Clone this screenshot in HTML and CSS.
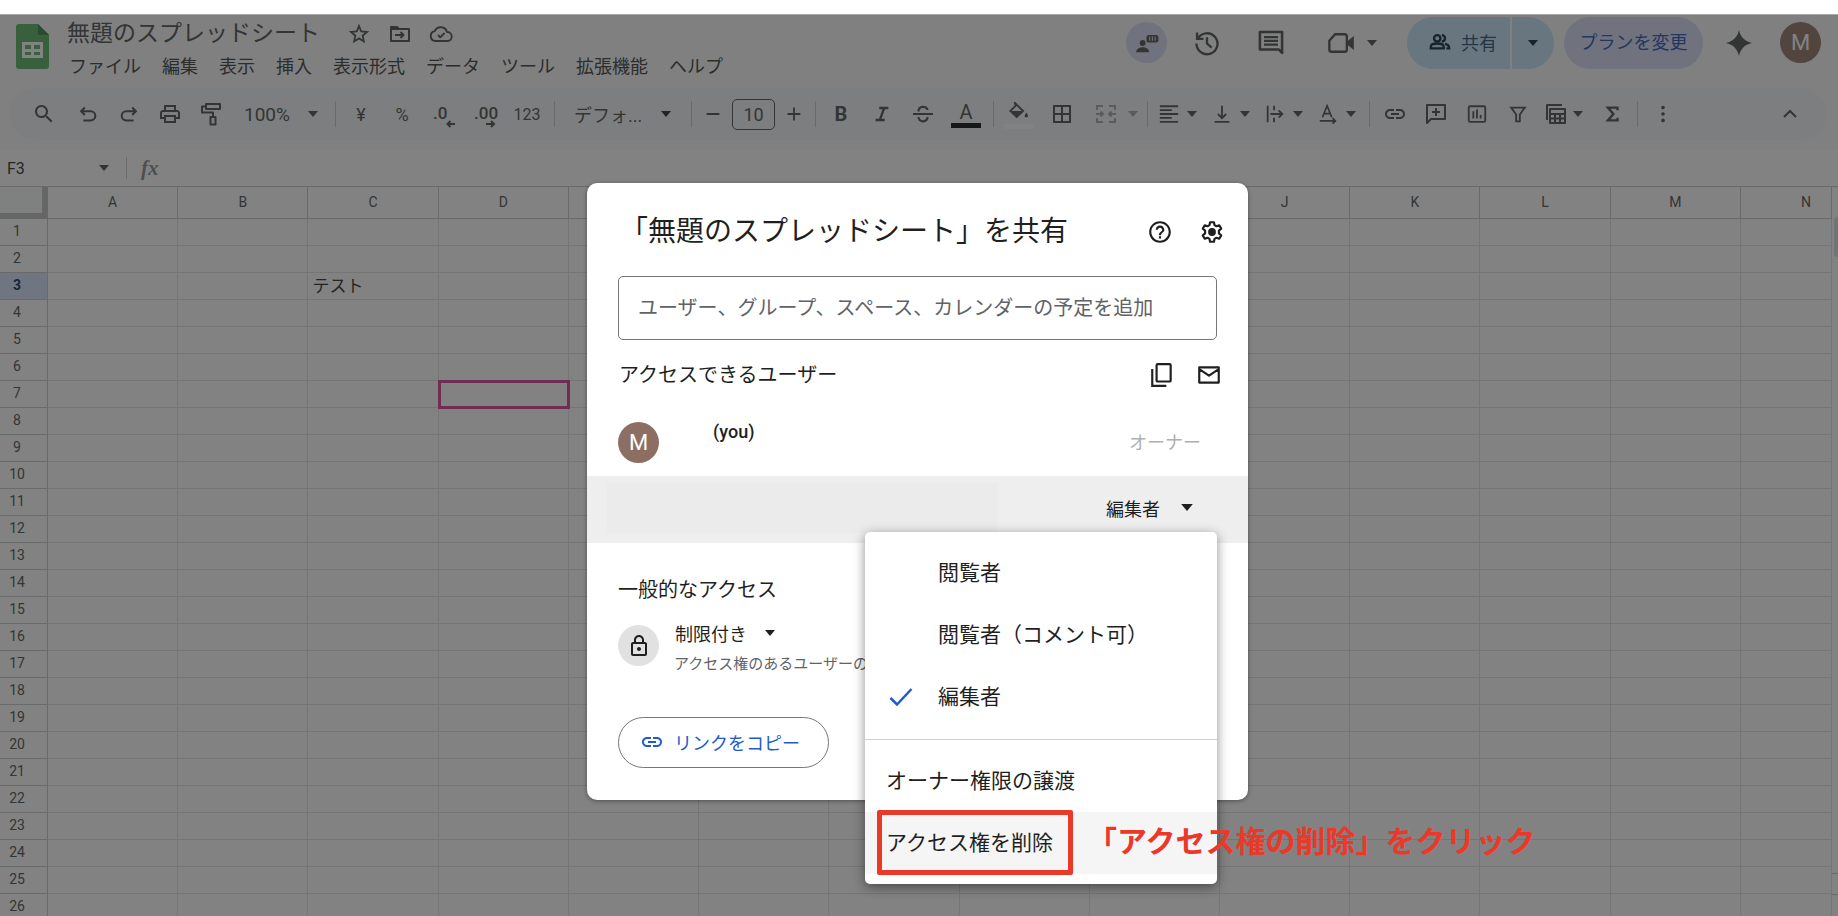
FILE: index.html
```html
<!DOCTYPE html>
<html lang="ja">
<head>
<meta charset="utf-8">
<title>無題のスプレッドシート</title>
<link rel="stylesheet" href="styles.css">
</head>
<body>
<svg class="sprite" aria-hidden="true">
  <symbol id="star" viewBox="0 0 24 24"><path d="M12 4l2.200 5.400 5.800.5-4.400 3.800 1.300 5.700L12 16.400l-4.900 3 1.300-5.700L4 9.900l5.800-.5z" fill="none" stroke="currentColor" stroke-width="1.800"/></symbol>
  <symbol id="folder" viewBox="0 0 24 24"><path d="M3 19V5h6l2 2h10v12zM7 13h8M12.500 10l3 3-3 3" fill="none" stroke="currentColor" stroke-width="2" stroke-linejoin="round"/><path d="M3 5h6l2 3H3z" fill="currentColor"/></symbol>
  <symbol id="cloud" viewBox="0 0 24 24"><path d="M6.500 19A5 5 0 0 1 5.800 9.100 6.500 6.500 0 0 1 18 10a4.500 4.500 0 0 1 .5 9zM9 13l2.300 2.300L15.500 11" fill="none" stroke="currentColor" stroke-width="1.900" stroke-linejoin="round"/></symbol>
  <symbol id="search" viewBox="0 0 24 24"><path fill="currentColor" d="M15.500 14h-.79l-.28-.27C15.410 12.590 16 11.110 16 9.500 16 5.910 13.090 3 9.500 3S3 5.910 3 9.500 5.910 16 9.500 16c1.610 0 3.090-.59 4.230-1.570l.27.28v.79l5 4.990L20.490 19l-4.990-5zm-6 0C7.010 14 5 11.990 5 9.500S7.010 5 9.500 5 14 7.010 14 9.500 11.990 14 9.500 14z"/></symbol>
  <symbol id="undo" viewBox="0 0 24 24"><path d="M8.500 5L4.500 9l4 4M5 9h10a5 5 0 0 1 0 10H7" fill="none" stroke="currentColor" stroke-width="2.200"/></symbol>
  <symbol id="redo" viewBox="0 0 24 24"><path d="M15.500 5l4 4-4 4M19 9H9a5 5 0 0 0 0 10h8" fill="none" stroke="currentColor" stroke-width="2.200"/></symbol>
  <symbol id="print" viewBox="0 0 24 24"><path fill="currentColor" d="M19 8h-1V3H6v5H5c-1.660 0-3 1.340-3 3v6h4v4h12v-4h4v-6c0-1.660-1.340-3-3-3zM8 5h8v3H8V5zm8 14H8v-4h8v4zm2-4v-2H6v2H4v-4c0-.55.45-1 1-1h14c.55 0 1 .45 1 1v4h-2z"/></symbol>
  <symbol id="paint" viewBox="0 0 24 24"><path d="M7 2h14v5H7zM7 4.500H3v6h11v4.500M11.500 15h5v7.500h-5z" fill="none" stroke="currentColor" stroke-width="2" stroke-linejoin="round"/></symbol>
  <symbol id="caret" viewBox="0 0 10 6"><path d="M0 0h10L5 6z" fill="currentColor"/></symbol>
  <symbol id="dec-less" viewBox="0 0 24 8"><path d="M22 4h-8M17.500 1l-3 3 3 3" fill="none" stroke="currentColor" stroke-width="2"/></symbol>
  <symbol id="dec-more" viewBox="0 0 24 8"><path d="M12 4h8M17 1l3 3-3 3" fill="none" stroke="currentColor" stroke-width="2"/></symbol>
  <symbol id="minus" viewBox="0 0 24 24"><path d="M5 12h14" stroke="currentColor" stroke-width="2"/></symbol>
  <symbol id="plus" viewBox="0 0 24 24"><path d="M5 12h14M12 5v14" stroke="currentColor" stroke-width="2"/></symbol>
  <symbol id="italic" viewBox="0 0 24 24"><path d="M9 5.500h10M5 18.500h10M14.300 5.500l-4.600 13" fill="none" stroke="currentColor" stroke-width="2.600"/></symbol>
  <symbol id="strike" viewBox="0 0 24 24"><path d="M2 12h20M7.500 9.500C7 3.500 16 3.500 16.500 8M7.500 15c.5 6 9.500 5.500 9 0" fill="none" stroke="currentColor" stroke-width="2.200"/></symbol>
  <symbol id="fill" viewBox="0 0 24 24"><path d="M7 1.500l9.500 9.500-7 6.500-7-6.500 6-6z" fill="none" stroke="currentColor" stroke-width="2"/><path d="M3 11h13l-6.500 6.500zM20 12.500c3 4 1.800 5.500 0 5.500s-3-1.500 0-5.500z" fill="currentColor"/></symbol>
  <symbol id="borders" viewBox="0 0 24 24"><path d="M4 4h16v16H4zM4 12h16M12 4v16" fill="none" stroke="currentColor" stroke-width="2"/></symbol>
  <symbol id="merge" viewBox="0 0 24 24"><path d="M3 8V4h6M15 4h6v4M3 16v4h6M15 20h6v-4M2 12h7M6.500 9.500L9 12l-2.500 2.500M22 12h-7M17.500 9.500L15 12l2.500 2.500" fill="none" stroke="currentColor" stroke-width="2"/></symbol>
  <symbol id="align" viewBox="0 0 24 24"><path d="M2 3.500h20M2 7.800h13M2 12h20M2 16.300h13M2 20.500h20" stroke="currentColor" stroke-width="2"/></symbol>
  <symbol id="valign" viewBox="0 0 24 24"><path d="M4 20.500h16M12 3v13M7.500 12l4.500 4.500 4.500-4.500" fill="none" stroke="currentColor" stroke-width="2"/></symbol>
  <symbol id="overflow" viewBox="0 0 24 24"><path d="M4 3v18M11 3v5M11 16v5M7 12h13M16 8l4 4-4 4" fill="none" stroke="currentColor" stroke-width="2"/></symbol>
  <symbol id="rotate" viewBox="0 0 24 24"><path d="M6 15.500L11 3l5 12.500M8 11.500h6M3 19.500h17M17 16.500l3 3-3 3" fill="none" stroke="currentColor" stroke-width="1.900"/></symbol>
  <symbol id="link" viewBox="0 0 24 24"><path fill="currentColor" d="M3.900 12c0-1.710 1.390-3.100 3.100-3.100h4V7H7c-2.760 0-5 2.240-5 5s2.240 5 5 5h4v-1.900H7c-1.710 0-3.100-1.390-3.100-3.100zM8 13h8v-2H8v2zm9-6h-4v1.900h4c1.710 0 3.100 1.390 3.100 3.100s-1.390 3.100-3.100 3.100h-4V17h4c2.760 0 5-2.240 5-5s-2.240-5-5-5z"/></symbol>
  <symbol id="add-note" viewBox="0 0 24 24"><path d="M3 21V3h18v14H7zM12 6v8M8 10h8" fill="none" stroke="currentColor" stroke-width="2" stroke-linejoin="round"/></symbol>
  <symbol id="chart" viewBox="0 0 24 24"><rect x="3" y="3.500" width="18" height="17" rx="1.500" fill="none" stroke="currentColor" stroke-width="2"/><path d="M8 9v8M12 7v10M16 13v4" stroke="currentColor" stroke-width="2"/></symbol>
  <symbol id="filter" viewBox="0 0 24 24"><path d="M4.500 5h15L14 12.500V20h-4v-7.500z" fill="none" stroke="currentColor" stroke-width="2"/></symbol>
  <symbol id="views" viewBox="0 0 24 24"><path d="M18 3H3v15M6 7h15v14H6zM6 12h15M6 16.500h15M11 12v9M16 12v9" fill="none" stroke="currentColor" stroke-width="2" stroke-linejoin="round"/></symbol>
  <symbol id="sigma" viewBox="0 0 24 24"><path d="M18 8V5H7.500l6 7-6 7H18v-3" fill="none" stroke="currentColor" stroke-width="2.600"/></symbol>
  <symbol id="dots" viewBox="0 0 24 24"><path d="M12 5h.01M12 12h.01M12 19h.01" stroke="currentColor" stroke-width="4" stroke-linecap="round"/></symbol>
  <symbol id="chevron" viewBox="0 0 24 24"><path d="M6 15l6-6 6 6" fill="none" stroke="currentColor" stroke-width="2"/></symbol>
  <symbol id="presence" viewBox="0 0 24 24"><circle cx="8" cy="12" r="2.700" fill="currentColor"/><path d="M2 20.500c0-6 12-6 12 0z" fill="currentColor"/><rect x="11.500" y="4.500" width="11" height="7" rx="2" fill="currentColor"/><path d="M14.500 6v4M17 6v4M19.500 6v4" stroke="#d3dbf5"/></symbol>
  <symbol id="history" viewBox="0 0 24 24"><path d="M3.500 3v5.500H9M4 8.500A9 9 0 1 1 3 12.500M12 7v5.500l4 3.500" fill="none" stroke="currentColor" stroke-width="2"/></symbol>
  <symbol id="comments" viewBox="0 0 24 24"><path d="M2.500 2.500h19v18l-3-3h-16z" fill="none" stroke="currentColor" stroke-width="2.200" stroke-linejoin="round"/><path d="M6 7h12M6 10.200h12M6 13.400h12" stroke="currentColor" stroke-width="2"/></symbol>
  <symbol id="camera" viewBox="0 0 24 24"><path d="M7 4.500h8a2 2 0 0 1 2 2v11a2 2 0 0 1-2 2H4a2 2 0 0 1-2-2V10z" fill="none" stroke="currentColor" stroke-width="2"/><path d="M17 11l6-5v12l-6-5z" fill="currentColor"/></symbol>
  <symbol id="people" viewBox="0 0 24 24"><circle cx="9" cy="8" r="3.500" fill="none" stroke="currentColor" stroke-width="2.600"/><path d="M2 19v-2c0-4.500 14-4.500 14 0v2zM14 4.500a3.500 3.500 0 0 1 0 7M17.500 14c3 .5 4.500 2 4.500 5h-3" fill="none" stroke="currentColor" stroke-width="2.600"/></symbol>
  <symbol id="spark" viewBox="0 0 24 24"><path d="M12 0c1.300 6.500 5.500 10.700 12 12-6.500 1.300-10.700 5.500-12 12C10.700 17.500 6.500 13.300 0 12 6.500 10.700 10.700 6.500 12 0z" fill="currentColor"/></symbol>
  <symbol id="help" viewBox="0 0 24 24"><path fill="currentColor" d="M11 18h2v-2h-2v2zm1-16C6.480 2 2 6.480 2 12s4.480 10 10 10 10-4.480 10-10S17.520 2 12 2zm0 18c-4.410 0-8-3.590-8-8s3.590-8 8-8 8 3.590 8 8-3.590 8-8 8zm0-14c-2.210 0-4 1.790-4 4h2c0-1.100.9-2 2-2s2 .9 2 2c0 2-3 1.750-3 5h2c0-2.250 3-2.500 3-5 0-2.210-1.790-4-4-4z"/></symbol>
  <symbol id="gear" viewBox="0 0 24 24"><path fill="none" stroke="currentColor" stroke-width="2" stroke-linejoin="round" d="M10.200 3h3.600l.5 2.700 1.800 1 2.600-.9 1.800 3.100-2.100 1.800v2.600l2.100 1.800-1.800 3.100-2.600-.9-1.800 1-.5 2.700h-3.600l-.5-2.700-1.800-1-2.600.9-1.800-3.100 2.100-1.800v-2.600L3.500 8.900l1.800-3.100 2.600.9 1.800-1z"/><circle cx="12" cy="12" r="3.600" fill="currentColor"/></symbol>
  <symbol id="copy" viewBox="0 0 24 24"><rect x="7" y="2" width="13" height="16" rx="1" fill="none" stroke="currentColor" stroke-width="2"/><path d="M3 6.500V22h13" fill="none" stroke="currentColor" stroke-width="2"/></symbol>
  <symbol id="mail" viewBox="0 0 24 24"><path d="M3 5h18v14H3zM3 6.500l9 6 9-6" fill="none" stroke="currentColor" stroke-width="2" stroke-linejoin="round"/></symbol>
  <symbol id="lock" viewBox="0 0 24 24"><path fill="currentColor" d="M18 8h-1V6c0-2.760-2.240-5-5-5S7 3.240 7 6v2H6c-1.100 0-2 .9-2 2v10c0 1.100.9 2 2 2h12c1.100 0 2-.9 2-2V10c0-1.100-.9-2-2-2zM9 6c0-1.660 1.340-3 3-3s3 1.340 3 3v2H9V6zm9 14H6V10h12v10zm-6-3c1.100 0 2-.9 2-2s-.9-2-2-2-2 .9-2 2 .9 2 2 2z"/></symbol>
  <symbol id="check" viewBox="0 0 24 24"><path d="M1.500 13l6.500 6.500L22.500 4" fill="none" stroke="currentColor" stroke-width="2.500"/></symbol>
</svg>

<div class="app">
  <header class="top">
    <a class="logo" href="#" aria-label="スプレッドシート ホーム">
      <svg viewBox="0 0 33 45"><path d="M3 0h19l11 11v31a3 3 0 0 1-3 3H3a3 3 0 0 1-3-3V3a3 3 0 0 1 3-3z" fill="#4fae5a"/><path d="M22 0l11 11H22z" fill="#2c7d3c"/><path d="M6 18h21v16H6zm3 3v4h6v-4zm9 0v4h6v-4zm-9 7v3h6v-3zm9 0v3h6v-3z" fill="#fff" fill-rule="evenodd"/></svg>
    </a>
    <div class="doc">
      <div class="doc-line">
        <h1 class="doc-title">無題のスプレッドシート</h1>
        <button class="doc-btn" aria-label="スターを付ける"><svg class="i24"><use href="#star"/></svg></button>
        <button class="doc-btn" aria-label="移動"><svg class="i24"><use href="#folder"/></svg></button>
        <button class="doc-btn" aria-label="保存状況"><svg class="i24"><use href="#cloud"/></svg></button>
      </div>
      <nav class="menus">
        <button>ファイル</button><button>編集</button><button>表示</button><button>挿入</button><button>表示形式</button><button>データ</button><button>ツール</button><button>拡張機能</button><button>ヘルプ</button>
      </nav>
    </div>
    <div class="actions">
      <button class="presence" aria-label="共同編集者"><svg class="i26"><use href="#presence"/></svg></button>
      <button class="act hist" aria-label="変更履歴"><svg class="i28"><use href="#history"/></svg></button>
      <button class="act note" aria-label="コメント"><svg class="i28"><use href="#comments"/></svg></button>
      <button class="act meet" aria-label="ビデオ通話"><svg class="i28"><use href="#camera"/></svg><svg class="caret"><use href="#caret"/></svg></button>
      <div class="share">
        <button class="share-main"><svg class="i22"><use href="#people"/></svg>共有</button><button class="share-more" aria-label="共有オプション"><svg class="caret"><use href="#caret"/></svg></button>
      </div>
      <button class="plan">プランを変更</button>
      <button class="act spark" aria-label="Gemini"><svg class="i26"><use href="#spark"/></svg></button>
      <button class="avatar" aria-label="アカウント">M</button>
    </div>
  </header>

  <div class="bar-wrap">
    <div class="toolbar" role="toolbar">
      <button class="tb find" aria-label="検索"><svg class="i24"><use href="#search"/></svg></button>
      <button class="tb" aria-label="元に戻す"><svg class="i22"><use href="#undo"/></svg></button>
      <button class="tb" aria-label="やり直し"><svg class="i22"><use href="#redo"/></svg></button>
      <button class="tb" aria-label="印刷"><svg class="i24"><use href="#print"/></svg></button>
      <button class="tb" aria-label="書式を貼り付け"><svg class="i24"><use href="#paint"/></svg></button>
      <button class="tb zoom">100%<svg class="caret"><use href="#caret"/></svg></button>
      <span class="sep"></span>
      <button class="tb">¥</button>
      <button class="tb">%</button>
      <button class="tb dec"><span>.0</span><svg><use href="#dec-less"/></svg></button>
      <button class="tb dec"><span>.00</span><svg><use href="#dec-more"/></svg></button>
      <button class="tb wide num">123</button>
      <span class="sep"></span>
      <button class="tb font">デフォ...<svg class="caret"><use href="#caret"/></svg></button>
      <span class="sep"></span>
      <button class="tb slim" aria-label="縮小"><svg class="i22"><use href="#minus"/></svg></button>
      <input class="size" value="10" aria-label="フォントサイズ">
      <button class="tb slim" aria-label="拡大"><svg class="i22"><use href="#plus"/></svg></button>
      <span class="sep"></span>
      <button class="tb bold">B</button>
      <button class="tb" aria-label="斜体"><svg class="i22"><use href="#italic"/></svg></button>
      <button class="tb" aria-label="取り消し線"><svg class="i24"><use href="#strike"/></svg></button>
      <button class="tb wide ink"><span>A</span></button>
      <span class="sep"></span>
      <button class="tb pour" aria-label="塗りつぶし"><svg class="i22"><use href="#fill"/></svg></button>
      <button class="tb wide" aria-label="枠線"><svg class="i24"><use href="#borders"/></svg></button>
      <button class="tb drop merge" aria-label="結合"><svg class="i24"><use href="#merge"/></svg><svg class="caret"><use href="#caret"/></svg></button>
      <span class="sep"></span>
      <button class="tb drop" aria-label="水平揃え"><svg class="i22"><use href="#align"/></svg><svg class="caret"><use href="#caret"/></svg></button>
      <button class="tb drop" aria-label="垂直揃え"><svg class="i22"><use href="#valign"/></svg><svg class="caret"><use href="#caret"/></svg></button>
      <button class="tb drop" aria-label="折り返し"><svg class="i22"><use href="#overflow"/></svg><svg class="caret"><use href="#caret"/></svg></button>
      <button class="tb drop" aria-label="回転"><svg class="i22"><use href="#rotate"/></svg><svg class="caret"><use href="#caret"/></svg></button>
      <span class="sep"></span>
      <button class="tb" aria-label="リンク"><svg class="i24"><use href="#link"/></svg></button>
      <button class="tb" aria-label="コメントを挿入"><svg class="i24"><use href="#add-note"/></svg></button>
      <button class="tb" aria-label="グラフ"><svg class="i22"><use href="#chart"/></svg></button>
      <button class="tb" aria-label="フィルタ"><svg class="i22"><use href="#filter"/></svg></button>
      <button class="tb drop" aria-label="表示"><svg class="i24"><use href="#views"/></svg><svg class="caret"><use href="#caret"/></svg></button>
      <button class="tb" aria-label="関数"><svg class="i22"><use href="#sigma"/></svg></button>
      <span class="sep"></span>
      <button class="tb" aria-label="その他"><svg class="i22"><use href="#dots"/></svg></button>
      <button class="tb collapse" aria-label="メニューを非表示"><svg class="i24"><use href="#chevron"/></svg></button>
    </div>
  </div>

  <div class="formula">
    <button class="name-box">F3<svg class="caret"><use href="#caret"/></svg></button>
    <span class="fx">fx</span>
  </div>

  <div class="sheet">
    <table class="grid">
      <thead><tr id="cols"><th class="corner"></th></tr></thead>
      <tbody id="rows"></tbody>
    </table>
    <div class="scroll"><span class="thumb"></span><span class="arrow-btn"></span><span class="arrow-btn"></span></div>
  </div>

  <div class="scrim">
    <section class="dialog" role="dialog" aria-labelledby="dlg-title">
      <div class="dlg-head">
        <h2 id="dlg-title">「無題のスプレッドシート」を共有</h2>
        <button class="icon-btn" aria-label="ヘルプ"><svg class="i26"><use href="#help"/></svg></button>
        <button class="icon-btn" aria-label="設定"><svg class="i26"><use href="#gear"/></svg></button>
      </div>
      <div class="pad"><input class="add-people" aria-label="ユーザーを追加" placeholder="ユーザー、グループ、スペース、カレンダーの予定を追加"></div>
      <div class="section-row">
        <h3>アクセスできるユーザー</h3>
        <button class="icon-btn" aria-label="コピー"><svg class="i26"><use href="#copy"/></svg></button>
        <button class="icon-btn" aria-label="メール"><svg class="i26"><use href="#mail"/></svg></button>
      </div>
      <div class="person">
        <span class="avatar">M</span>
        <span class="you">(you)</span>
        <span class="owner">オーナー</span>
      </div>
      <div class="person selected">
        <span class="hidden-name"></span>
        <button class="role">編集者<svg class="caret big"><use href="#caret"/></svg></button>
        <div class="menu" role="menu">
          <button class="opt" role="menuitemradio"><span class="tick"></span>閲覧者</button>
          <button class="opt" role="menuitemradio"><span class="tick"></span>閲覧者（コメント可）</button>
          <button class="opt" role="menuitemradio" aria-checked="true"><span class="tick"><svg class="i24"><use href="#check"/></svg></span>編集者</button>
          <hr>
          <button class="opt" role="menuitem">オーナー権限の譲渡</button>
          <button class="opt hover" role="menuitem">アクセス権を削除</button>
          <div class="mark"></div>
          <p class="callout">「アクセス権の削除」をクリック</p>
        </div>
      </div>
      <div class="general">
        <h3>一般的なアクセス</h3>
        <div class="access">
          <span class="lock"><svg class="i24"><use href="#lock"/></svg></span>
          <div class="access-text">
            <button class="limit">制限付き<svg class="caret"><use href="#caret"/></svg></button>
            <p>アクセス権のあるユーザーのみが、リンクから開くことができます</p>
          </div>
        </div>
        <button class="copy-link"><svg class="i24"><use href="#link"/></svg>リンクをコピー</button>
      </div>
    </section>
  </div>
</div>
<script src="app.js"></script>
</body>
</html>
```

FILE: styles.css
```css
* { box-sizing: border-box; }

body {
  margin: 0;
  padding-top: 14px;
  height: 100vh;
  overflow: hidden;
  background: #fff;
  color: #1f1f1f;
  font-family: Roboto, "Noto Sans CJK JP", sans-serif;
  font-size: 18px;
}

h1, h2, h3, p { margin: 0; font-weight: 400; }
a { text-decoration: none; }
svg { display: block; flex: none; }

button {
  display: flex;
  align-items: center;
  margin: 0;
  padding: 0;
  border: 0;
  background: none;
  color: inherit;
  font: inherit;
  white-space: nowrap;
}

.sprite { position: absolute; width: 0; height: 0; }
.i22 { width: 22px; height: 22px; }
.i24 { width: 24px; height: 24px; }
.i26 { width: 26px; height: 26px; }
.i28 { width: 28px; height: 28px; }
.caret { width: 10px; height: 6px; }
.caret.big { width: 12px; height: 7px; }

.app {
  position: relative;
  display: flex;
  flex-direction: column;
  height: 100%;
  overflow: hidden;
  background: #f9fbfd;
}

/* title bar */
.top {
  display: flex;
  flex: none;
  height: 74px;
  padding: 0 17px 0 16px;
  color: #444746;
}
.logo { margin-top: 10px; }
.logo svg { width: 33px; height: 45px; }
.doc { margin-left: 18px; }
.doc-line { display: flex; align-items: center; height: 38px; padding-top: 2px; }
.doc-title { margin-right: 27px; font-size: 23px; line-height: 38px; white-space: nowrap; }
.doc-btn { margin-right: 17px; }
.menus { display: flex; gap: 21px; height: 26px; padding-left: 2px; color: #333; }

.actions { display: flex; align-items: center; height: 57px; margin-left: auto; }
.actions > * { flex: none; }
.avatar {
  display: flex;
  flex: none;
  align-items: center;
  justify-content: center;
  width: 41px;
  height: 41px;
  border-radius: 50%;
  background: #8d6e63;
  color: #fff;
  font-size: 22px;
}
.presence {
  justify-content: center;
  width: 41px;
  height: 41px;
  border-radius: 50%;
  background: #d3dbf5;
}
.hist { margin-left: 26px; }
.note { margin-left: 36px; }
.meet { gap: 12px; margin-left: 42px; }
.share { display: flex; gap: 2px; height: 52px; margin-left: 30px; color: #001d35; }
.share-main { gap: 10px; width: 103px; padding: 0 0 2px 22px; border-radius: 26px 0 0 26px; background: #c2e2f7; color: #1c4a70; }
.share-main svg { color: #001d35; }
.share-more { justify-content: center; width: 42px; border-radius: 0 26px 26px 0; background: #c2e2f7; }
.plan {
  justify-content: center;
  width: 139px;
  height: 52px;
  margin-left: 10px;
  padding-bottom: 3px;
  border-radius: 26px;
  background: #d3dbf5;
  color: #1c4cae;
}
.spark { margin: 0 28px 0 23px; }

/* toolbar */
.bar-wrap { flex: none; padding: 0 11px 10px 9px; }
.toolbar {
  display: flex;
  align-items: center;
  gap: 5px;
  height: 52px;
  padding: 0 19px 0 15px;
  overflow: hidden;
  border-radius: 26px;
  background: #f4f6f8;
  color: #444746;
}
.toolbar > * { flex: none; }
.tb { justify-content: center; width: 36px; height: 36px; }
.tb.find { width: 40px; margin-right: 1px; }
.tb.wide { width: 40px; }
.tb.slim { width: 28px; }
.tb.zoom { justify-content: space-between; width: 94px; padding: 0 10px; font-size: 19px; }
.tb.font { justify-content: space-between; width: 122px; padding: 0 13px 0 12px; }
.tb.font .caret { color: #1f1f1f; }
.tb.drop { justify-content: flex-start; width: 48px; padding-left: 3px; }
.tb.drop .caret { margin-left: auto; margin-right: 6px; }
.tb.merge { width: 53px; padding-left: 7px; color: #9da2a8; }
.tb.merge .caret { margin-right: 2px; }
.tb.num { font-size: 16px; }
.tb.dec {
  flex-direction: column;
  align-items: flex-start;
  padding: 6px 0 0 8px;
  font-size: 17px;
  font-weight: 500;
  line-height: 14px;
}
.tb.dec svg { width: 24px; height: 8px; }
.tb.bold { font-size: 20px; font-weight: 700; }
.tb.ink { padding: 0 5px; }
.tb.ink span { width: 30px; border-bottom: 5px solid #000; font-size: 20px; line-height: 22px; }
.tb.pour { border-bottom: 5px solid #fff; height: 30px; width: 30px; margin: 0 3px; }
.tb.collapse { margin-left: auto; }
.sep { width: 1px; height: 26px; margin: 0 2px; background: #c7c7c7; }
.size {
  width: 43px;
  height: 31px;
  padding: 0;
  border: 1px solid #444746;
  border-radius: 5px;
  background: none;
  color: inherit;
  font: inherit;
  text-align: center;
}

/* formula bar */
.formula { display: flex; flex: none; align-items: center; height: 36px; background: #fff; }
.name-box {
  justify-content: space-between;
  width: 127px;
  height: 22px;
  padding: 0 17px 0 7px;
  border-right: 1px solid #c7c7c7;
  font-size: 16px;
}
.name-box .caret { color: #444746; }
.fx { margin-left: 14px; color: #80868b; font: italic 700 21px "Liberation Serif", serif; }

/* cells */
.sheet { display: flex; flex: 1; min-height: 0; overflow: hidden; border-top: 1px solid #c7c7c7; background: #fff; }
.grid { flex: 1; table-layout: fixed; width: 100%; border-spacing: 0; }
.grid th, .grid td {
  height: 27px;
  padding: 0;
  overflow: hidden;
  border: 0 solid #e1e1e1;
  border-width: 0 1px 1px 0;
  font-size: 17px;
  line-height: 20px;
  white-space: nowrap;
}
.grid th { border-color: #c4c7c5; color: #444746; font: 400 14px/20px Roboto, sans-serif; }
.grid thead th { height: 32px; padding-bottom: 2px; }
.grid .corner { width: 48px; border: 0 solid #bdbdbd; border-width: 0 6px 6px 0; background: #f8f9fa; }
.grid .last { width: 91px; padding-left: 40px; }
.grid tbody th { padding: 0 13px 2px 0; }
.grid tbody th.on { background: #d3e3fd; color: #041e49; font-weight: 700; }
.grid td.text { padding-left: 4px; }
.grid td.cursor { outline: 3px solid #d6338a; outline-offset: -2px; }
.scroll { display: flex; flex: none; flex-direction: column; width: 6px; padding-bottom: 1px; }
.thumb { height: 40px; margin: 30px 0 auto 2px; border-radius: 4px 0 0 4px; background: #dadce0; }
.arrow-btn { height: 21px; border-top: 1px solid #c4c7c5; }

/* share dialog */
.scrim {
  position: absolute;
  inset: 0;
  display: flex;
  justify-content: center;
  align-items: flex-start;
  padding: 168px 3px 0 0;
  border-top: 1px solid #a5a8a5;
  background: rgba(40, 40, 40, 0.58);
}
.dialog {
  width: 661px;
  padding-bottom: 32px;
  border-radius: 10px;
  background: #fff;
  box-shadow: 0 1px 4px rgba(0, 0, 0, 0.4);
}
.dlg-head { display: flex; align-items: center; height: 93px; padding: 4px 23px 0 33px; }
.dlg-head h2 { margin-right: auto; font-size: 28px; line-height: 40px; white-space: nowrap; }
.icon-btn { margin-left: 26px; }
.section-row .icon-btn { margin-left: 21px; }
.pad { padding: 0 31px; }
.add-people {
  display: block;
  width: 100%;
  height: 64px;
  padding: 0 19px;
  border: 1px solid #747775;
  border-radius: 5px;
  background: #fff;
  font: inherit;
  font-size: 20px;
}
.add-people::placeholder { color: #5f6368; opacity: 1; }
.section-row { display: flex; align-items: center; height: 70px; padding: 0 26px 0 32px; }
h3 { font-size: 20px; line-height: 30px; }
.section-row h3 { margin-right: auto; }
.person { position: relative; display: flex; align-items: center; height: 66px; padding: 0 47px 2px 31px; }
.you { align-self: flex-start; margin: 10px auto 0 54px; font-weight: 500; line-height: 24px; }
.owner { padding-bottom: 3px; color: #b0b0b0; }
.selected { height: 67px; padding: 0 55px 4px 20px; background: #eee; }
.hidden-name { width: 391px; height: 50px; margin-right: auto; background: #ebebeb; }
.role { gap: 21px; }
.general { padding: 32px 31px 0; }
.access { display: flex; gap: 15px; margin-top: 14px; overflow: hidden; }
.lock {
  display: flex;
  flex: none;
  align-items: center;
  justify-content: center;
  width: 41px;
  height: 41px;
  margin-top: 6px;
  border-radius: 50%;
  background: #e1e1e1;
}
.limit { gap: 18px; height: 30px; padding: 0 0 2px 1px; }
.access-text p { color: #5f6368; font-size: 15px; line-height: 30px; white-space: nowrap; }
.copy-link {
  gap: 10px;
  height: 51px;
  margin-top: 38px;
  padding: 0 28px 2px 21px;
  border: 1px solid #747775;
  border-radius: 26px;
  color: #1f5bcf;
}

/* role menu */
.menu {
  position: absolute;
  top: 56px;
  right: 31px;
  width: 352px;
  padding: 10px 0;
  border-radius: 5px;
  background: #fff;
  box-shadow: 0 3px 12px rgba(0, 0, 0, 0.45);
  font-size: 21px;
}
.menu hr { height: 1px; margin: 11px 0 10px; border: 0; background: #d0d0d0; }
.opt { width: 100%; height: 62px; padding: 0 0 4px 21px; }
.opt.hover { background: #f5f5f5; }
.tick { width: 52px; padding: 3px 0 0 3px; color: #1f5bcf; }
.mark {
  position: absolute;
  bottom: 9px;
  left: 12px;
  width: 196px;
  height: 65px;
  border: 5px solid #ea3829;
  border-radius: 2px;
}
.callout {
  position: absolute;
  bottom: 20px;
  left: 222px;
  color: #ea3829;
  font-size: 30px;
  font-weight: 700;
  line-height: 44px;
  white-space: nowrap;
}
```

FILE: app.js
```js
const letters = "ABCDEFGHIJKLMN".split("");
const values = { C3: "テスト" };
const activeRow = 3;
const cursor = "D7";

const cols = document.getElementById("cols");
letters.forEach((letter, i) => {
  const th = document.createElement("th");
  th.textContent = letter;
  if (i === letters.length - 1) th.className = "last";
  cols.append(th);
});

const rows = document.getElementById("rows");
for (let r = 1; r <= 26; r++) {
  const tr = document.createElement("tr");
  const th = document.createElement("th");
  th.textContent = r;
  if (r === activeRow) th.className = "on";
  tr.append(th);
  for (const letter of letters) {
    const td = document.createElement("td");
    if (values[letter + r]) {
      td.textContent = values[letter + r];
      td.className = "text";
    }
    if (letter + r === cursor) td.className = "cursor";
    tr.append(td);
  }
  rows.append(tr);
}
```
